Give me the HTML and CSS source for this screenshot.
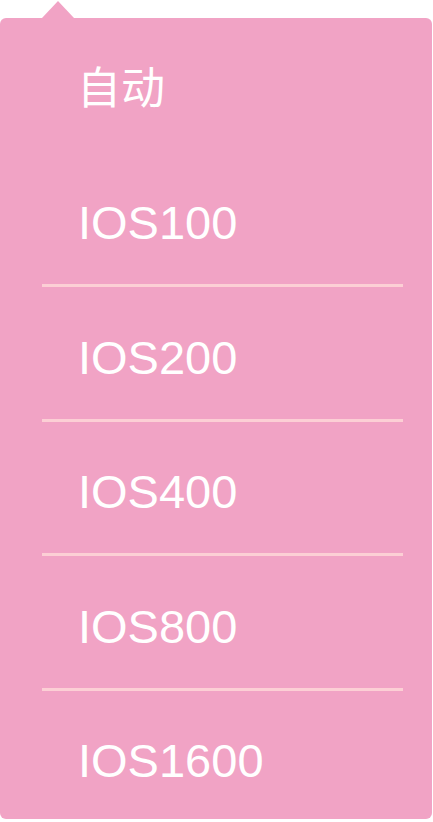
FILE: index.html
```html
<!DOCTYPE html>
<html lang="zh">
<head>
<meta charset="utf-8">
<title>ISO</title>
<link rel="stylesheet" href="styles.css">
</head>
<body>
<div class="popover">
  <span class="arrow"></span>
  <ul class="menu">
    <li class="item first">自动</li>
    <li class="item">IOS100</li>
    <li class="item">IOS200</li>
    <li class="item">IOS400</li>
    <li class="item">IOS800</li>
    <li class="item last">IOS1600</li>
  </ul>
</div>
</body>
</html>
```

FILE: styles.css
```css
html, body {
  margin: 0;
  padding: 0;
  background: #ffffff;
}

body {
  width: 433px;
  height: 822px;
  overflow: hidden;
  font-family: "Liberation Sans", "Noto Sans CJK SC", Arial, sans-serif;
}

.popover {
  position: relative;
  margin-top: 18px;
  width: 432px;
  height: 801px;
  background: #f1a3c5;
  border-radius: 6px;
}

.arrow {
  position: absolute;
  top: -17px;
  left: 42px;
  width: 0;
  height: 0;
  border-left: 16.5px solid transparent;
  border-right: 16.5px solid transparent;
  border-bottom: 17px solid #f1a3c5;
}

.menu {
  list-style: none;
  margin: 0;
  padding: 0;
}

.item {
  margin: 0 29px 0 42px;
  padding: 45.5px 0 36px 36px;
  font-size: 47px;
  line-height: 50px;
  color: #ffffff;
  border-bottom: 3px solid #fccfd5;
}

.item.first {
  border-bottom-color: transparent;
  font-size: 44px;
  padding-left: 35px;
}

.item.last {
  border-bottom: none;
  padding-bottom: 32px;
}
```
